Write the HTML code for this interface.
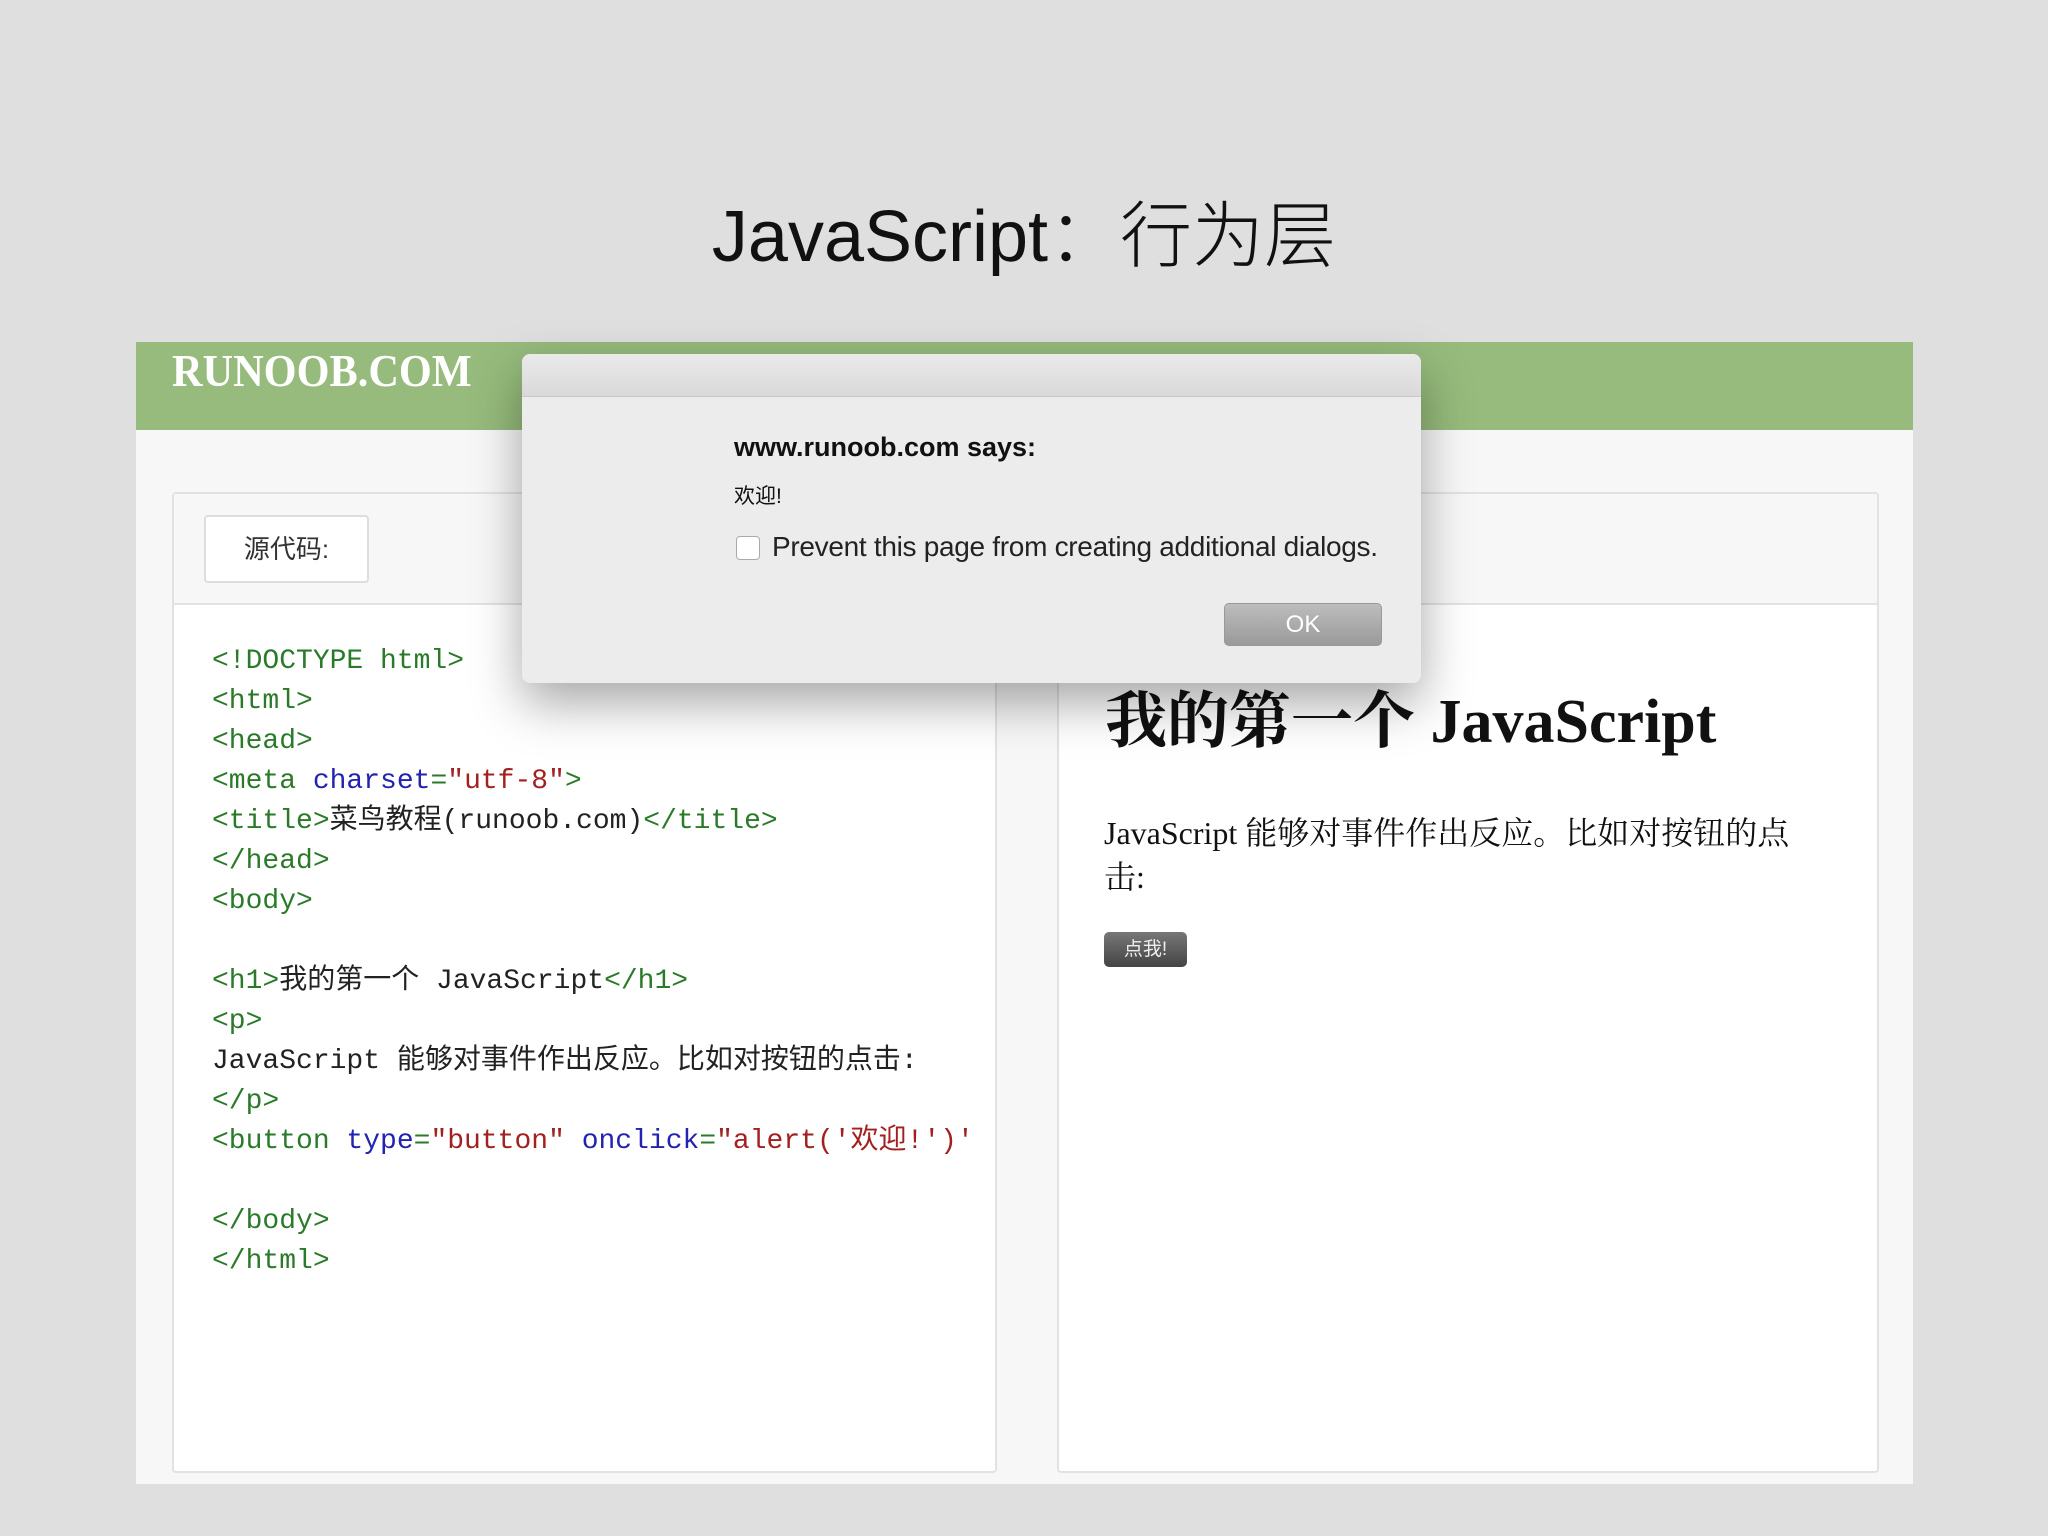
<!DOCTYPE html>
<html><head><meta charset="utf-8"><style>
body{margin:0;width:2048px;height:1536px;background:#dfdfdf;position:relative;overflow:hidden;font-family:"Liberation Sans","Noto Sans CJK SC",sans-serif}
.abs{position:absolute}
.title{left:0;width:2048px;top:192px;text-align:center;font-size:72px;font-weight:300;color:#111;line-height:90px}
.hdr{left:136px;top:342px;width:1777px;height:88px;background:#96bb7c}
.logo{left:172px;top:344px;font-family:"Liberation Serif",serif;font-weight:bold;font-size:46px;color:#fff;transform:scaleX(0.92);transform-origin:left}
.content{left:136px;top:430px;width:1777px;height:1054px;background:#f7f7f7}
.panel{background:#fff;border:2px solid #e2e2e2;border-radius:4px}
.ph{background:#f7f7f7;border-bottom:2px solid #e2e2e2}
.code{left:212px;top:642px;font-family:"Liberation Mono","Noto Sans CJK SC",monospace;font-size:28px;line-height:40px;color:#2a7a2a;white-space:pre}
.k{color:#2323b0}.s{color:#a32020}.t{color:#222}
.dlg{left:522px;top:354px;width:899px;height:329px;background:#ececec;border-radius:8px;box-shadow:0 20px 50px rgba(0,0,0,.35);overflow:hidden}
.dbar{height:42px;background:linear-gradient(#eaeaea,#d9d9d9);border-bottom:1px solid #c8c8c8}
</style></head><body>
<div class="abs title">JavaScript：行为层</div>
<div class="abs hdr"></div>
<div class="abs logo">RUNOOB.COM</div>
<div class="abs content"></div>
<div class="abs panel" style="left:172px;top:492px;width:821px;height:977px">
 <div class="ph" style="height:109px"></div>
</div>
<div class="abs" style="left:204px;top:515px;width:161px;height:64px;background:#fff;border:2px solid #ddd;border-radius:4px;font-size:26px;line-height:64px;text-align:center;color:#333">源代码:</div>
<div class="abs panel" style="left:1057px;top:492px;width:818px;height:977px">
 <div class="ph" style="height:109px"></div>
</div>
<div class="abs code">&lt;!DOCTYPE html&gt;
&lt;html&gt;
&lt;head&gt;
&lt;meta <span class="k">charset</span>=<span class="s">"utf-8"</span>&gt;
&lt;title&gt;<span class="t">菜鸟教程(runoob.com)</span>&lt;/title&gt;
&lt;/head&gt;
&lt;body&gt;

&lt;h1&gt;<span class="t">我的第一个 JavaScript</span>&lt;/h1&gt;
&lt;p&gt;
<span class="t">JavaScript 能够对事件作出反应。比如对按钮的点击:</span>
&lt;/p&gt;
&lt;button <span class="k">type</span>=<span class="s">"button"</span> <span class="k">onclick</span>=<span class="s">"alert('欢迎!')'</span>

&lt;/body&gt;
&lt;/html&gt;</div>
<div class="abs" style="left:1105px;top:686px;font-family:'Liberation Serif','Noto Serif CJK SC',serif;font-weight:bold;font-size:62px;line-height:72px;color:#111">我的第一个 JavaScript</div>
<div class="abs" style="left:1104px;top:811px;width:710px;font-family:'Liberation Serif','Noto Serif CJK SC',serif;font-size:32px;line-height:44px;color:#111">JavaScript 能够对事件作出反应。比如对按钮的点击:</div>
<div class="abs" style="left:1104px;top:932px;width:83px;height:35px;border-radius:5px;background:linear-gradient(#777,#444);color:#eee;font-size:19px;line-height:35px;text-align:center">点我!</div>
<div class="abs dlg">
 <div class="dbar"></div>
 <div class="abs" style="left:212px;top:78px;font-size:27px;font-weight:bold;color:#111">www.runoob.com says:</div>
 <div class="abs" style="left:212px;top:126px;font-size:21px;color:#111">欢迎!</div>
 <div class="abs" style="left:214px;top:182px;width:22px;height:22px;background:#fff;border:1px solid #aaa;border-radius:4px"></div>
 <div class="abs" style="left:250px;top:177px;font-size:28px;color:#222;letter-spacing:-0.3px">Prevent this page from creating additional dialogs.</div>
 <div class="abs" style="left:702px;top:249px;width:156px;height:41px;border-radius:5px;background:linear-gradient(#bdbdbd,#9a9a9a);border:1px solid #999;color:#fff;font-size:24px;line-height:41px;text-align:center">OK</div>
</div>
</body></html>
